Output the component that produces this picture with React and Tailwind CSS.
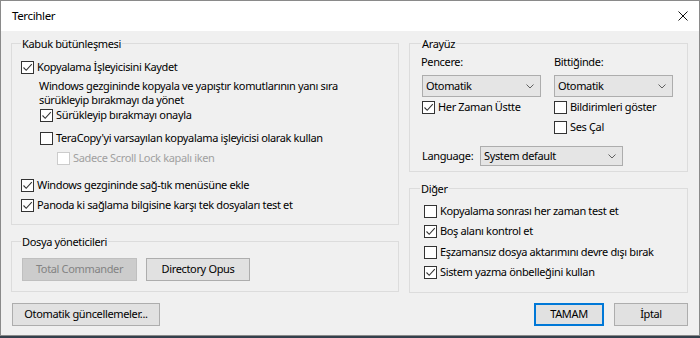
import clsx from 'clsx';

function Check({ checked, disabled, children, className }) {
  return (
    <label className={clsx('flex h-[15px] items-center', className)}>
      <span
        className={clsx(
          'flex h-[13px] w-[13px] shrink-0 items-center justify-center border bg-white',
          disabled ? 'border-[#cccccc]' : 'border-[#333333]'
        )}
      >
        {checked && (
          <svg width="11" height="11" viewBox="0 0 11 11">
            <path d="M1.5 5.5 L4.2 8.3 L9.8 2.2" fill="none" stroke="#333333" strokeWidth="1.1" />
          </svg>
        )}
      </span>
      <span className={clsx('ml-[3px] whitespace-nowrap', disabled && 'text-[#a0a0a0]')}>{children}</span>
    </label>
  );
}

function Select({ value, className }) {
  return (
    <div
      className={clsx(
        'flex items-center justify-between border border-[#adadad] bg-[#e5e5e5] pl-[3px] pr-[6px]',
        className
      )}
    >
      <span>{value}</span>
      <svg width="8" height="5" viewBox="0 0 8 5">
        <path d="M0.5 0.5 L4 4 L7.5 0.5" fill="none" stroke="#606060" />
      </svg>
    </div>
  );
}

function Button({ children, className, disabled, primary }) {
  return (
    <button
      type="button"
      className={clsx(
        'flex h-[23px] items-center justify-center',
        disabled
          ? 'border border-[#bfbfbf] bg-[#cccccc] text-[#838383]'
          : primary
            ? 'border-2 border-[#0078d7] bg-[#e1e1e1]'
            : 'border border-[#adadad] bg-[#e1e1e1]',
        className
      )}
    >
      {children}
    </button>
  );
}

// Windows group box: the title sits on the top edge, which is drawn by the two pieces beside it
function Group({ title, lead, bodyClass, className, children }) {
  return (
    <div className={clsx('flex flex-col', className)}>
      <div className="flex h-[15px] leading-[15px]">
        <div className={clsx('h-[8px] self-end border-l border-t border-[#dcdcdc]', lead)} />
        <span className="px-[1px]">{title}</span>
        <div className="h-[8px] flex-1 self-end border-r border-t border-[#dcdcdc]" />
      </div>
      <div className={clsx('flex flex-col border-x border-b border-[#dcdcdc]', bodyClass)}>{children}</div>
    </div>
  );
}

export default function App() {
  return (
    <div className="h-[338px] w-[700px] bg-[#34404c]">
      <div className="flex h-[336px] flex-col border border-[#8a8a8a] bg-[#f0f0f0] font-['Noto_Sans',sans-serif] text-[11px] tracking-[-0.35px] text-black">
        <div className="flex h-[30px] items-center justify-between bg-white px-[11px]">
          <span className="text-[11.5px]">Tercihler</span>
          <svg width="10" height="10" viewBox="0 0 10 10">
            <path d="M0.5 0.5 L9.5 9.5 M9.5 0.5 L0.5 9.5" stroke="#111111" strokeWidth="1" />
          </svg>
        </div>

        <div className="flex gap-[10px] px-[10px] pt-[5px]">
          <div className="flex w-[388px] flex-col">
            <Group title="Kabuk bütünleşmesi" lead="w-[10px]" bodyClass="pb-[11px] pl-[9px]">
              <Check checked className="mt-[9px]">Kopyalama İşleyicisini Kaydet</Check>
              <p className="ml-[18px] mt-[4px] leading-[14px]">
                Windows gezgininde kopyala ve yapıştır komutlarının yanı sıra
                <br />
                sürükleyip bırakmayı da yönet
              </p>
              <Check checked className="ml-[19px] mt-[1px]">Sürükleyip bırakmayı onayla</Check>
              <Check className="ml-[19px] mt-[8px]">TeraCopy'yi varsayılan kopyalama işleyicisi olarak kullan</Check>
              <Check disabled className="ml-[36px] mt-[5px]">Sadece Scroll Lock kapalı iken</Check>
              <Check checked className="mt-[12px]">Windows gezgininde sağ-tık menüsüne ekle</Check>
              <Check checked className="mt-[5px]">Panoda ki sağlama bilgisine karşı tek dosyaları test et</Check>
            </Group>

            <Group title="Dosya yöneticileri" className="mt-[9px]" lead="w-[10px]" bodyClass="pb-[10px] pl-[10px]">
              <div className="mt-[9px] flex gap-[9px]">
                <Button disabled className="w-[115px]">Total Commander</Button>
                <Button className="w-[104px]">Directory Opus</Button>
              </div>
            </Group>
          </div>

          <div className="flex w-[279px] flex-col">
            <Group title="Arayüz" lead="w-[12px]" bodyClass="pb-[5px] pl-[11px]">
              <div className="mt-[4px] flex leading-[14px]">
                <span className="w-[133px]">Pencere:</span>
                <span>Bittiğinde:</span>
              </div>
              <div className="ml-[1px] mt-[6px] flex gap-[13px]">
                <Select value="Otomatik" className="h-[22px] w-[119px]" />
                <Select value="Otomatik" className="h-[22px] w-[119px]" />
              </div>
              <div className="ml-[1px] mt-[3px] flex">
                <div className="w-[132px]">
                  <Check checked>Her Zaman Üstte</Check>
                </div>
                <div className="flex flex-col gap-[5px]">
                  <Check>Bildirimleri göster</Check>
                  <Check>Ses Çal</Check>
                </div>
              </div>
              <div className="ml-[1px] mt-[11px] flex items-center">
                <span className="w-[58px]">Language:</span>
                <Select value="System default" className="h-[20px] w-[143px]" />
              </div>
            </Group>

            <Group title="Diğer" className="mt-[9px]" lead="w-[11px]" bodyClass="pb-[12px] pl-[14px]">
              <Check className="mt-[8px]">Kopyalama sonrası her zaman test et</Check>
              <Check checked className="mt-[5px]">Boş alanı kontrol et</Check>
              <Check className="mt-[6px]">Eşzamansız dosya aktarımını devre dışı bırak</Check>
              <Check checked className="mt-[5px]">Sistem yazma önbelleğini kullan</Check>
            </Group>
          </div>
        </div>

        <div className="mt-[10px] flex items-center px-[11px]">
          <Button className="w-[148px]">Otomatik güncellemeler...</Button>
          <div className="ml-auto flex gap-[10px]">
            <Button primary className="w-[70px]">TAMAM</Button>
            <Button className="w-[74px]">İptal</Button>
          </div>
        </div>
      </div>
    </div>
  );
}
